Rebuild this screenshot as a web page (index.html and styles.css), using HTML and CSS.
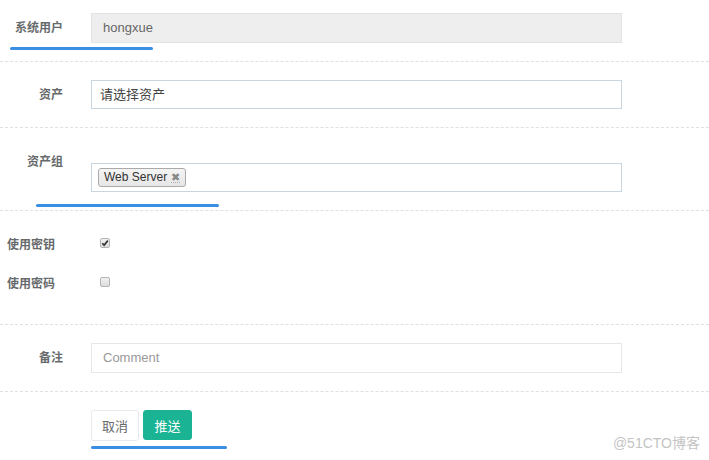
FILE: index.html
```html
<!DOCTYPE html>
<html lang="zh">
<head>
<meta charset="utf-8">
<title>推送</title>
<link rel="stylesheet" href="styles.css">
</head>
<body>
<form class="form">
  <div class="group g1">
    <label class="label">系统用户</label>
    <div class="control"><div class="input readonly">hongxue</div></div>
  </div>
  <div class="group g2">
    <label class="label">资产</label>
    <div class="control"><div class="input blue">请选择资产</div></div>
  </div>
  <div class="group g3">
    <label class="label top">资产组</label>
    <div class="control pad">
      <div class="input blue tags">
        <span class="tag">Web Server <span class="x">✖</span></span>
      </div>
    </div>
  </div>
  <div class="group g4">
    <div class="check-row">
      <span class="clabel">使用密钥</span>
      <span class="cbox checked"><svg viewBox="0 0 10 10" width="10" height="10"><path d="M2.3 5.2 L4.1 7.2 L7.8 2.6" fill="none" stroke="#333" stroke-width="1.7"/></svg></span>
    </div>
    <div class="check-row">
      <span class="clabel">使用密码</span>
      <span class="cbox"></span>
    </div>
  </div>
  <div class="group g5">
    <label class="label">备注</label>
    <div class="control"><div class="input gray placeholder">Comment</div></div>
  </div>
  <div class="group g6">
    <div class="buttons">
      <button type="button" class="btn white">取消</button>
      <button type="button" class="btn primary">推送</button>
    </div>
  </div>
</form>
<div class="mark m1"></div>
<div class="mark m2"></div>
<div class="mark m3"></div>
<div class="watermark">@51CTO博客</div>
</body>
</html>
```
FILE: styles.css
```css
html, body {
  margin: 0;
  padding: 0;
}
body {
  width: 709px;
  height: 460px;
  position: relative;
  overflow: hidden;
  background: #fff;
  font-family: "Liberation Sans", "Noto Sans CJK SC", sans-serif;
  color: #676a6c;
}
.form {
  display: flex;
  flex-direction: column;
}
.group {
  display: grid;
  grid-template-columns: 63px 531px;
  column-gap: 28px;
  align-items: center;
  border-bottom: 1px dashed #e0e0e0;
}
.g1 { padding: 13px 0 18px; }
.g2 { padding: 18px 0 18px; }
.g3 { padding: 0 0 18px; align-items: start; }
.g4 { display: flex; flex-direction: column; align-items: stretch; gap: 19px; padding: 22px 0 32px; }
.g5 { padding: 18px 0 18px; }
.g6 { display: block; border-bottom: none; padding: 18px 0 0 91px; }
.label {
  font-size: 12px;
  font-weight: bold;
  text-align: right;
  line-height: 16px;
  color: #676a6c;
}
.label.top { margin-top: 26px; }
.control.pad { padding-top: 35px; }
.input {
  box-sizing: border-box;
  height: 29px;
  border: 1px solid #e5e6e7;
  padding: 0 11px;
  font-size: 13px;
  line-height: 27px;
  color: #555;
  background: #fff;
}
.input.readonly {
  height: 30px;
  line-height: 28px;
  background: #eee;
  border-color: #e3e3e3;
  color: #666;
}
.input.blue { border-color: #c9d6e0; color: #444; padding-left: 8px; }
.input.gray { height: 30px; line-height: 28px; }
.placeholder { color: #999; }
.input.tags {
  padding: 0 6px;
  display: flex;
  align-items: center;
}
.tag {
  box-sizing: border-box;
  height: 19px;
  display: inline-flex;
  align-items: center;
  gap: 4px;
  padding: 0 5px;
  border: 1px solid #aaa;
  border-radius: 3px;
  background: linear-gradient(#f4f4f4, #e6e6e6);
  font-size: 12px;
  color: #333;
  line-height: 17px;
}
.x {
  font-size: 11px;
  color: #888;
  border-bottom: 1px dotted #aaa;
  line-height: 10px;
}
.check-row {
  display: flex;
  align-items: center;
  height: 20px;
  padding-left: 7px;
}
.clabel {
  width: 93px;
  font-size: 12px;
  font-weight: bold;
  color: #676a6c;
}
.cbox {
  box-sizing: border-box;
  width: 10px;
  height: 10px;
  border: 1px solid #b3b3b3;
  border-radius: 2px;
  background: linear-gradient(#f2f2f2, #dcdcdc);
  display: flex;
}
.cbox svg { margin: -1px; }
.buttons { display: flex; gap: 4px; align-items: flex-start; }
.btn {
  box-sizing: border-box;
  font-family: "Liberation Sans", "Noto Sans CJK SC", sans-serif;
  font-size: 13px;
  border-radius: 3px;
  height: 31px;
  padding: 0;
  cursor: pointer;
}
.btn.white {
  width: 48px;
  background: #fff;
  border: 1px solid #e7eaec;
  color: #676a6c;
}
.btn.primary {
  width: 49px;
  height: 30px;
  background: #1ab394;
  border: 1px solid #1ab394;
  color: #fff;
}
.mark {
  position: absolute;
  height: 3px;
  border-radius: 2px;
  background: #3a8fe3;
}
.m1 { left: 10px; top: 47px; width: 143px; }
.m2 { left: 36px; top: 204px; width: 183px; }
.m3 { left: 91px; top: 446px; width: 136px; }
.watermark {
  position: absolute;
  right: 9px;
  top: 434px;
  font-size: 14px;
  line-height: 18px;
  color: #c4c4c4;
}
```
